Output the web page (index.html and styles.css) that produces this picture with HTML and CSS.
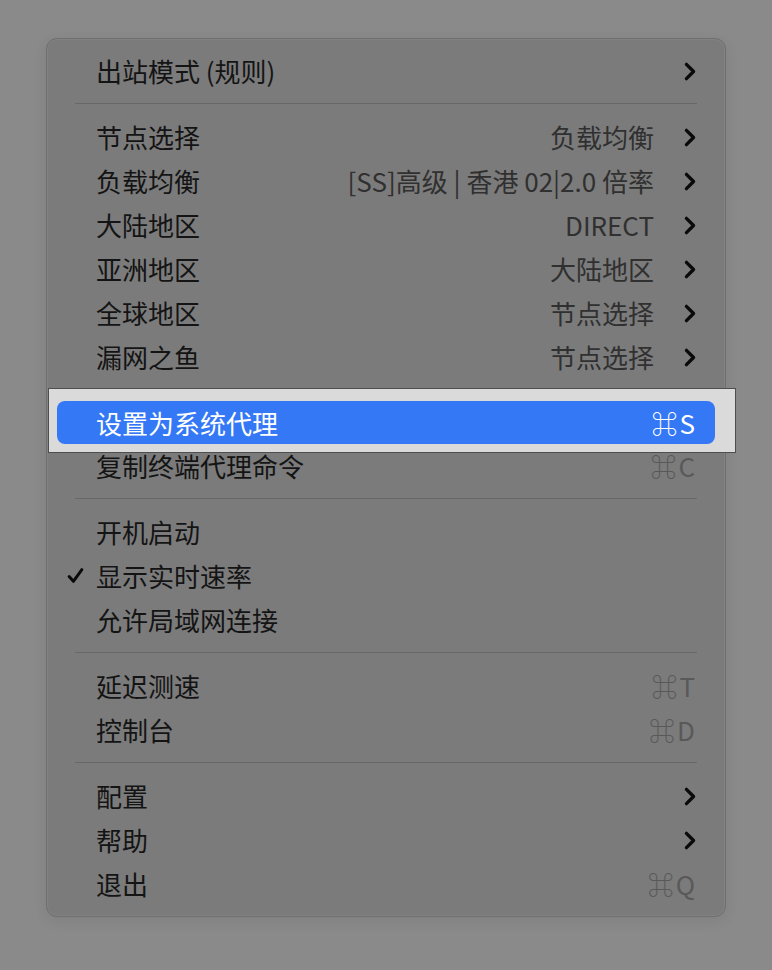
FILE: index.html
```html
<!DOCTYPE html>
<html lang="zh-CN">
	<head>
		<meta charset="UTF-8" />
		<meta name="viewport" content="width=device-width, initial-scale=1.0" />
		<title>菜单</title>
		<link rel="stylesheet" href="styles.css">
	</head>
	<body>
		<div class="menu">
			<div class="item">
				<span class="label">出站模式 (规则)</span>
				<span class="arrow"><svg viewBox="0 0 10 16"><path d="M2 2l6 6-6 6" /></svg></span>
			</div>
			<div class="sep"></div>

			<div class="item">
				<span class="label">节点选择</span>
				<span class="value">负载均衡</span>
				<span class="arrow"><svg viewBox="0 0 10 16"><path d="M2 2l6 6-6 6" /></svg></span>
			</div>
			<div class="item">
				<span class="label">负载均衡</span>
				<span class="value">[SS]高级 | 香港 02|2.0 倍率</span>
				<span class="arrow"><svg viewBox="0 0 10 16"><path d="M2 2l6 6-6 6" /></svg></span>
			</div>
			<div class="item">
				<span class="label">大陆地区</span>
				<span class="value">DIRECT</span>
				<span class="arrow"><svg viewBox="0 0 10 16"><path d="M2 2l6 6-6 6" /></svg></span>
			</div>
			<div class="item">
				<span class="label">亚洲地区</span>
				<span class="value">大陆地区</span>
				<span class="arrow"><svg viewBox="0 0 10 16"><path d="M2 2l6 6-6 6" /></svg></span>
			</div>
			<div class="item">
				<span class="label">全球地区</span>
				<span class="value">节点选择</span>
				<span class="arrow"><svg viewBox="0 0 10 16"><path d="M2 2l6 6-6 6" /></svg></span>
			</div>
			<div class="item">
				<span class="label">漏网之鱼</span>
				<span class="value">节点选择</span>
				<span class="arrow"><svg viewBox="0 0 10 16"><path d="M2 2l6 6-6 6" /></svg></span>
			</div>
			<div class="sep"></div>

			<div class="focus">
				<div class="item active">
					<span class="label">设置为系统代理</span>
					<span class="key">⌘S</span>
				</div>
			</div>
			<div class="item">
				<span class="label">复制终端代理命令</span>
				<span class="key">⌘C</span>
			</div>
			<div class="sep"></div>

			<div class="item">
				<span class="label">开机启动</span>
			</div>
			<div class="item">
				<span class="check"><svg viewBox="0 0 16 16"><path d="M2 8.5l4 4.5 8-11" /></svg></span>
				<span class="label">显示实时速率</span>
			</div>
			<div class="item">
				<span class="label">允许局域网连接</span>
			</div>
			<div class="sep"></div>

			<div class="item">
				<span class="label">延迟测速</span>
				<span class="key">⌘T</span>
			</div>
			<div class="item">
				<span class="label">控制台</span>
				<span class="key">⌘D</span>
			</div>
			<div class="sep"></div>

			<div class="item">
				<span class="label">配置</span>
				<span class="arrow"><svg viewBox="0 0 10 16"><path d="M2 2l6 6-6 6" /></svg></span>
			</div>
			<div class="item">
				<span class="label">帮助</span>
				<span class="arrow"><svg viewBox="0 0 10 16"><path d="M2 2l6 6-6 6" /></svg></span>
			</div>
			<div class="item">
				<span class="label">退出</span>
				<span class="key">⌘Q</span>
			</div>
		</div>
	</body>
</html>
```

FILE: styles.css
```css
* {
	box-sizing: border-box;
}

body {
	margin: 0;
	min-height: 970px;
	background-color: #8a8a8a;
	font-family: "Noto Sans CJK SC", "Noto Sans", sans-serif;
	padding: 38px 0 0 46px;
}

.menu {
	width: 680px;
	padding: 10px 10px 10px 10px;
	background-color: #7b7b7b;
	border: 1px solid #6f6f6f;
	border-radius: 11px;
	box-shadow: inset 0 0 0 1px rgba(255, 255, 255, 0.06), 0 4px 14px rgba(0, 0, 0, 0.08);
}

.item {
	position: relative;
	display: flex;
	align-items: center;
	height: 44px;
	padding: 0 19px 0 39px;
	font-size: 26px;
	color: #141414;
	white-space: nowrap;
}

.label {
	flex: 1;
	line-height: 1;
}

.value {
	color: #303030;
	line-height: 1;
	margin-right: 28px;
}

.arrow {
	display: flex;
	width: 14px;
	justify-content: flex-end;
}

.arrow svg {
	width: 12px;
	height: 19px;
	fill: none;
	stroke: #0a0a0a;
	stroke-width: 2.8;
	stroke-linecap: round;
	stroke-linejoin: round;
}

.key {
	color: #595959;
	line-height: 1;
	margin-right: -1px;
	letter-spacing: 2px;
}

.check {
	position: absolute;
	left: 10px;
	top: 13px;
	display: flex;
}

.check svg {
	width: 17px;
	height: 18px;
	fill: none;
	stroke: #0a0a0a;
	stroke-width: 2.8;
	stroke-linecap: round;
	stroke-linejoin: round;
}

.sep {
	height: 1px;
	margin: 10px 18px 11px 18px;
	background-color: #686868;
}

.focus {
	position: relative;
	isolation: isolate;
}

.focus::before {
	content: "";
	position: absolute;
	top: -13px;
	bottom: -9px;
	left: -9px;
	right: -21px;
	z-index: -1;
	background-color: #dadada;
	border: 1px solid #4e4e4e;
}

.item.active {
	height: 43px;
	background-color: #3478f6;
	border-radius: 8px;
	color: #fff;
}

.item.active .key {
	color: #fff;
}
```
